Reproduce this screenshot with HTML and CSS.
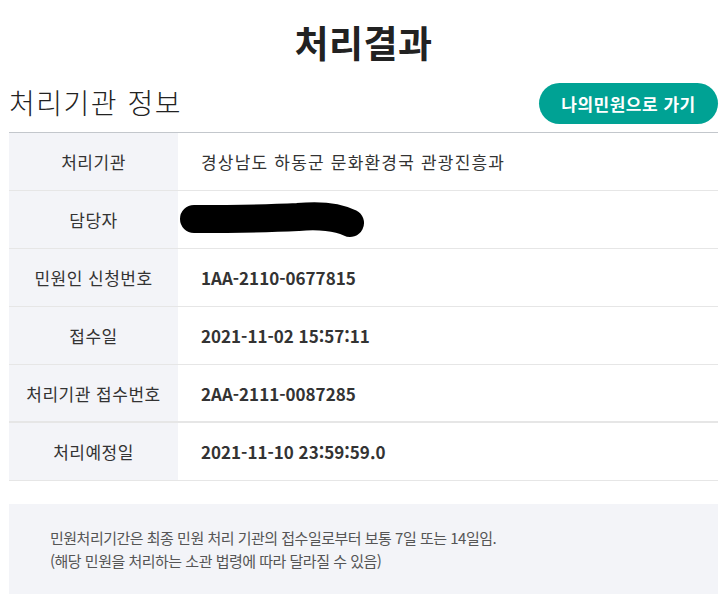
FILE: index.html
```html
<!DOCTYPE html>
<html lang="ko">
<head>
    <meta charset="UTF-8">
    <meta name="viewport" content="width=device-width, initial-scale=1.0">
    <title>처리결과</title>
    <link rel="stylesheet" href="styles.css">
</head>
<body>
    <div class="wrap">
        <h1 class="page-title">처리결과</h1>

        <div class="section-head">
            <h2>처리기관 정보</h2>
            <a href="#" class="btn-mine">나의민원으로 가기</a>
        </div>

        <table class="info">
            <tr>
                <th>처리기관</th>
                <td class="plain">경상남도 하동군 문화환경국 관광진흥과</td>
            </tr>
            <tr>
                <th>담당자</th>
                <td>
                    <!-- 담당자 이름 가림 -->
                    <svg class="mask" width="196" height="46" viewBox="0 0 196 46">
                        <path d="M16 22 C60 22 100 21 120 20 C140 18 160 20 172 26" fill="none" stroke="#000" stroke-width="28" stroke-linecap="round"/>
                    </svg>
                </td>
            </tr>
            <tr>
                <th>민원인 신청번호</th>
                <td>1AA-2110-0677815</td>
            </tr>
            <tr>
                <th>접수일</th>
                <td>2021-11-02 15:57:11</td>
            </tr>
            <tr class="thick">
                <th>처리기관 접수번호</th>
                <td>2AA-2111-0087285</td>
            </tr>
            <tr>
                <th>처리예정일</th>
                <td>2021-11-10 23:59:59.0</td>
            </tr>
        </table>

        <div class="notice">
            <p>민원처리기간은 최종 민원 처리 기관의 접수일로부터 보통 7일 또는 14일임.</p>
            <p>(해당 민원을 처리하는 소관 법령에 따라 달라질 수 있음)</p>
        </div>
    </div>
</body>
</html>
```

FILE: styles.css
```css
body {
    margin: 0;
    padding: 0;
    background: #fff;
    color: #222;
    font-family: "Noto Sans CJK KR", "Noto Sans", sans-serif;
}
.wrap {
    width: 709px;
    margin-left: 9px;
}
.page-title {
    margin: 0;
    padding-top: 16px;
    height: 56px;
    text-align: center;
    font-size: 37px;
    font-weight: bold;
    line-height: 52px;
    letter-spacing: 0.5px;
    color: #222;
}
.section-head {
    display: flex;
    justify-content: space-between;
    align-items: center;
    height: 60px;
    border-bottom: 1px solid #c3c7cc;
}
.section-head h2 {
    margin: 0;
    font-size: 28px;
    font-weight: 300;
    letter-spacing: 1.5px;
    color: #222;
}
.btn-mine {
    display: inline-block;
    width: 179px;
    height: 41px;
    line-height: 41px;
    margin-top: 2px;
    border-radius: 21px;
    background: #00a294;
    color: #fff;
    font-size: 17px;
    font-weight: bold;
    letter-spacing: 0.5px;
    text-align: center;
    text-decoration: none;
}
.info {
    width: 100%;
    border-collapse: collapse;
}
.info th,
.info td {
    height: 57px;
    padding: 0;
    border-bottom: 1px solid #e6e6e6;
    font-size: 17px;
}
.info th {
    width: 169px;
    background: #f3f4f8;
    font-weight: normal;
    letter-spacing: 0.5px;
    color: #333;
    text-align: center;
}
.info td {
    padding-left: 23px;
    font-weight: bold;
    color: #333;
}
.info td.plain {
    font-weight: normal;
    letter-spacing: 1.2px;
}
/* 접수번호 아래 구분선은 2px */
.info tr.thick th,
.info tr.thick td {
    height: 56px;
    border-bottom-width: 2px;
}
.mask {
    display: block;
    margin-left: -23px;
}
.notice {
    margin-top: 23px;
    padding: 22px 41px;
    height: 46px;
    background: #f3f4f8;
}
.notice p {
    margin: 0;
    font-size: 15px;
    line-height: 23px;
    letter-spacing: -0.5px;
    color: #555;
}
```
